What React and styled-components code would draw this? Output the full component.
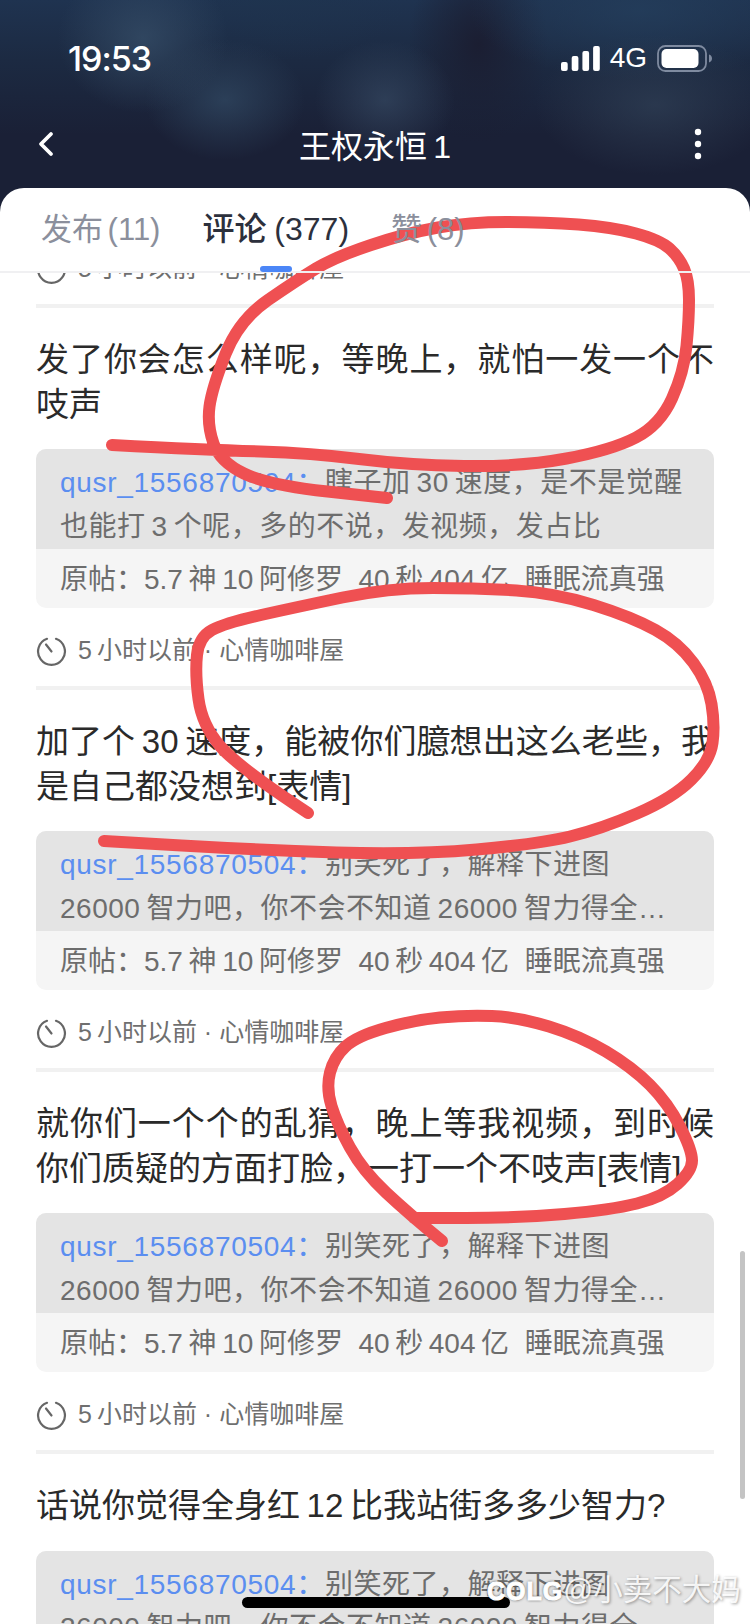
import React from "react";
import styled, { createGlobalStyle } from "styled-components";

const GlobalStyle = createGlobalStyle`
  html, body {
    margin: 0;
    padding: 0;
    background: #fff;
  }
`;

const Page = styled.div`
  position: relative;
  width: 750px;
  height: 1624px;
  overflow: hidden;
  display: flex;
  flex-direction: column;
  font-family: "Liberation Sans", "Noto Sans CJK SC", sans-serif;
  background-color: #1b2035;
  background-image:
    radial-gradient(ellipse 85px 75px at 143px 38px, rgba(56, 80, 106, 0.7), transparent),
    radial-gradient(ellipse 80px 60px at 225px 100px, rgba(50, 74, 100, 0.7), transparent),
    radial-gradient(ellipse 70px 60px at 385px 100px, rgba(58, 78, 104, 0.6), transparent),
    radial-gradient(ellipse 120px 70px at 655px 105px, rgba(48, 64, 86, 0.7), transparent),
    radial-gradient(ellipse 130px 60px at 280px 0px, rgba(30, 52, 78, 0.6), transparent),
    radial-gradient(ellipse 170px 70px at 640px 10px, rgba(36, 62, 92, 0.8), transparent),
    radial-gradient(ellipse 70px 100px at 478px 45px, #1b1e32, transparent),
    linear-gradient(180deg, #1f3350 0px, #1c2a42 60px, #1a2036 135px);
`;

const Header = styled.div`
  flex: 0 0 188px;
  display: flex;
  flex-direction: column;
  color: #fff;
`;

const StatusBar = styled.div`
  height: 116px;
  display: flex;
  align-items: center;
  justify-content: space-between;
  padding: 0 37px 0 68px;
`;

const Clock = styled.div`
  font-family: Inter, "Liberation Sans", sans-serif;
  font-size: 34px;
  font-weight: 500;
  letter-spacing: -1px;
`;

const StatusIcons = styled.div`
  display: flex;
  align-items: center;
  gap: 10px;
`;

const Network = styled.span`
  font-size: 28px;
`;

const NavBar = styled.div`
  height: 56px;
  display: flex;
  align-items: center;
  justify-content: space-between;
  padding: 0 48px 0 36px;
`;

const Title = styled.div`
  font-size: 32px;
`;

const Sheet = styled.div`
  flex: 1;
  min-height: 0;
  display: flex;
  flex-direction: column;
  background: #fff;
  border-radius: 24px 24px 0 0;
`;

const Tabs = styled.div`
  position: relative;
  z-index: 1;
  flex: 0 0 85px;
  box-sizing: border-box;
  display: flex;
  align-items: center;
  gap: 42px;
  padding-left: 41px;
  border-bottom: 2px solid #f0f0f2;
`;

const Tab = styled.div`
  position: relative;
  font-size: ${(p) => (p.$active ? "32px" : "31px")};
  line-height: 83px;
  word-spacing: ${(p) => (p.$active ? "-1px" : "-4px")};
  color: ${(p) => (p.$active ? "#2c303c" : "#8b8f9c")};
  font-weight: ${(p) => (p.$active ? 500 : 400)};

  &::after {
    content: "";
    display: ${(p) => (p.$active ? "block" : "none")};
    position: absolute;
    left: 50%;
    bottom: -1px;
    width: 32px;
    height: 6px;
    margin-left: -16px;
    border-radius: 3px;
    background: #4b86f7;
  }
`;

const Feed = styled.div`
  flex: 1;
  min-height: 0;
  overflow: hidden;
  padding: 0 36px;
`;

const Post = styled.div`
  border-top: 4px solid #f1f1f1;
  padding-top: 30px;
`;

const PostText = styled.div`
  font-size: 33px;
  line-height: 44.5px;
  color: #2a2a2a;
  margin-bottom: 22px;
`;

// every line but the last is justified across the full width
const PostLine = styled.div`
  text-align: justify;
  text-align-last: ${(p) => (p.$full ? "justify" : "left")};
`;

const Quote = styled.div`
  border-radius: 10px;
  overflow: hidden;
  background: #f5f5f5;
  font-size: 28px;
  color: #6d6d6d;
`;

const Reply = styled.div`
  height: 100px;
  box-sizing: border-box;
  padding: 12px 24px 0;
  background: #e4e4e4;
  line-height: 43.5px;
  letter-spacing: 0.5px;
`;

const ReplyLine = styled.div`
  white-space: nowrap;
`;

const Author = styled.span`
  color: #5b8ef0;
  letter-spacing: 0.7px;
`;

const Source = styled.div`
  height: 59px;
  padding: 0 24px;
  line-height: 62px;
  white-space: nowrap;
`;

const Meta = styled.div`
  height: 78px;
  box-sizing: border-box;
  padding-top: 27px;
  display: flex;
  align-items: flex-start;
  gap: 11px;
  font-size: 25px;
  line-height: 30px;
  color: #6f6f6f;
`;

const ClippedMeta = styled(Meta)`
  margin-top: -47px;
`;

const Overlay = styled.svg`
  position: absolute;
  left: 0;
  top: 0;
  pointer-events: none;
`;

const ScrollThumb = styled.div`
  position: absolute;
  right: 5px;
  top: 1251px;
  width: 5px;
  height: 248px;
  border-radius: 3px;
  background: #c4c4c4;
`;

const HomeBar = styled.div`
  position: absolute;
  left: 242px;
  top: 1597px;
  width: 268px;
  height: 11px;
  border-radius: 6px;
  background: #000;
`;

const Watermark = styled.div`
  position: absolute;
  left: 487px;
  top: 1572px;
  font-size: 29.5px;
  line-height: 36px;
  white-space: nowrap;
  color: rgba(255, 255, 255, 0.88);
  text-shadow: 1px 1px 3px rgba(0, 0, 0, 0.4);
`;

const Logo = styled.span`
  font-weight: 700;
  font-size: 25px;
  letter-spacing: 1px;
  color: #fff;
  -webkit-text-stroke: 1px #fff;
  text-shadow: 0 0 3px rgba(0, 0, 0, 0.9);
`;

const Stopwatch = () => (
  <svg width="31" height="31" viewBox="0 0 31 31" fill="none" stroke="#666" strokeWidth="2.2" strokeLinecap="round">
    <path d="M11 3.8A13.4 13.4 0 1 0 20 3.8" />
    <path d="M15.5 16.5 10 9.5" />
  </svg>
);

const META_TEXT = "5\u2009小时以前 · 心情咖啡屋";
const SOURCE_TEXT = "原帖：5.7\u2009神\u200910\u2009阿修罗\u00a0\u00a040\u2009秒\u2009404\u2009亿\u00a0\u00a0睡眠流真强";

const Time = () => (
  <Meta>
    <Stopwatch />
    <span>{META_TEXT}</span>
  </Meta>
);

const strokes = [
  [112,445, 210,450, 311,453, 407,465, 521,467, 612,450, 660,425, 684,372, 689,320, 689,280, 679,257, 660,240, 612,227, 545,222, 469,222, 407,233, 335,257, 297,280, 239,320, 212,388, 207,425, 220,462, 268,485, 387,498],
  [308,813, 238,767, 202,725, 195,673, 199,637, 225,623, 297,607, 388,588, 478,588, 555,593, 632,617, 679,643, 708,683, 715,725, 710,761, 673,798, 601,829, 539,844, 414,855, 259,850, 104,841],
  [442,1241, 409,1214, 363,1171, 337,1124, 326,1088, 334,1057, 357,1036, 414,1020, 466,1015, 518,1017, 580,1036, 632,1067, 668,1103, 692,1150, 692,1171, 663,1197, 611,1210, 518,1218, 414,1218],
];

// rounds the corners of a traced pen line
const toPath = (pts) => {
  let d = `M${pts[0]} ${pts[1]}`;
  for (let i = 2; i < pts.length - 2; i += 2) {
    const mx = (pts[i] + pts[i + 2]) / 2;
    const my = (pts[i + 1] + pts[i + 3]) / 2;
    d += `Q${pts[i]} ${pts[i + 1]} ${mx} ${my}`;
  }
  return d + `L${pts[pts.length - 2]} ${pts[pts.length - 1]}`;
};

const funnyReply = ["别笑死了，解释下进图", "26000\u2009智力吧，你不会不知道\u200926000\u2009智力得全…"];

const posts = [
  {
    text: ["发了你会怎么样呢，等晚上，就怕一发一个不", "吱声"],
    reply: ["瞎子加\u200930\u2009速度，是不是觉醒", "也能打\u20093\u2009个呢，多的不说，发视频，发占比"],
  },
  {
    text: ["加了个\u200930\u2009速度，能被你们臆想出这么老些，我", "是自己都没想到[表情]"],
    reply: funnyReply,
  },
  {
    text: ["就你们一个个的乱猜，晚上等我视频，到时候", "你们质疑的方面打脸，一打一个不吱声[表情]"],
    reply: funnyReply,
  },
  {
    text: ["话说你觉得全身红\u200912\u2009比我站街多多少智力?"],
    reply: funnyReply,
  },
];

const App = () => {
  return (
    <>
      <GlobalStyle />
      <Page>
        <Header>
          <StatusBar>
            <Clock>19:53</Clock>
            <StatusIcons>
              <svg width="39" height="25" viewBox="0 0 39 25" fill="#fff">
                <rect x="0" y="16" width="6.7" height="9" rx="2" />
                <rect x="10.7" y="10" width="6.7" height="15" rx="2" />
                <rect x="21.4" y="5" width="6.7" height="20" rx="2" />
                <rect x="32.1" y="0" width="6.7" height="25" rx="2" />
              </svg>
              <Network>4G</Network>
              <svg width="56" height="27" viewBox="0 0 56 27" fill="none">
                <rect x="1" y="1" width="48" height="25" rx="7.5" stroke="#7f8ba0" strokeWidth="1.8" />
                <rect x="4.5" y="4" width="37" height="19" rx="5" fill="#fff" />
                <path d="M52 9.5c2 .6 3 2.2 3 4s-1 3.4-3 4z" fill="#7f8ba0" />
              </svg>
            </StatusIcons>
          </StatusBar>
          <NavBar>
            <svg width="20" height="26" viewBox="0 0 20 26" fill="none" stroke="#fff" strokeWidth="3.8" strokeLinecap="round" strokeLinejoin="round">
              <path d="M15 3 5 13l10 10" />
            </svg>
            <Title>{"王权永恒\u20091"}</Title>
            <svg width="8" height="32" viewBox="0 0 8 32" fill="#fff">
              <circle cx="4" cy="4" r="3.2" />
              <circle cx="4" cy="16" r="3.2" />
              <circle cx="4" cy="28" r="3.2" />
            </svg>
          </NavBar>
        </Header>
        <Sheet>
          <Tabs>
            <Tab>发布 (11)</Tab>
            <Tab $active>评论 (377)</Tab>
            <Tab>赞 (8)</Tab>
          </Tabs>
          <Feed>
            <ClippedMeta>
              <Stopwatch />
              <span>{META_TEXT}</span>
            </ClippedMeta>
            {posts.map((post, i) => (
              <Post key={i}>
                <PostText>
                  {post.text.map((line, j) => (
                    <PostLine key={line} $full={j < post.text.length - 1}>
                      {line}
                    </PostLine>
                  ))}
                </PostText>
                <Quote>
                  <Reply>
                    <ReplyLine>
                      <Author>qusr_1556870504：</Author>
                      {post.reply[0]}
                    </ReplyLine>
                    <ReplyLine>{post.reply[1]}</ReplyLine>
                  </Reply>
                  <Source>{SOURCE_TEXT}</Source>
                </Quote>
                <Time />
              </Post>
            ))}
          </Feed>
        </Sheet>
        <ScrollThumb />
        <Overlay width="750" height="1624" viewBox="0 0 750 1624" fill="none" stroke="#ef5052" strokeWidth="12" strokeLinecap="round" strokeLinejoin="round">
          {strokes.map((pts, i) => (
            <path key={i} d={toPath(pts)} />
          ))}
        </Overlay>
        <HomeBar />
        <Watermark>
          <Logo>COLG</Logo>@小卖不大妈
        </Watermark>
      </Page>
    </>
  );
};

export default App;
